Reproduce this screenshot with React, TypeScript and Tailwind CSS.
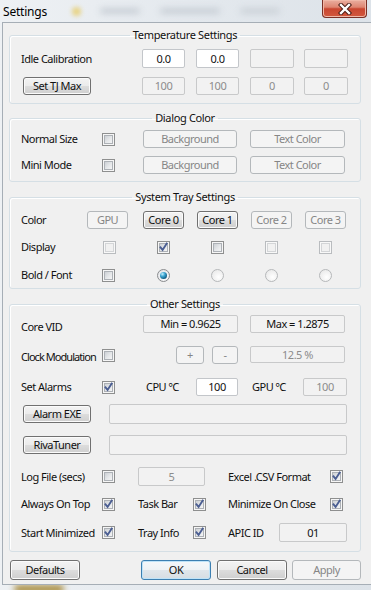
import React from "react";

type Tone = "white" | "ro" | "dis";

function Edit({ tone, className, children }: { tone: Tone; className: string; children?: React.ReactNode }) {
  const t =
    tone === "white"
      ? "bg-white border-[#c3c6ca] text-[#111]"
      : tone === "ro"
      ? "bg-[#f2f2f2] border-[#c8c9ca] text-[#111]"
      : "bg-[#f2f2f2] border-[#c8c9ca] text-[#8c8c8c]";
  return <span className={`flex shrink-0 items-center justify-center rounded-[2px] border ${t} ${className}`}>{children}</span>;
}

type BtnKind = "normal" | "dis" | "def";

function Btn({ kind = "normal", className, children }: { kind?: BtnKind; className: string; children: React.ReactNode }) {
  const k =
    kind === "normal"
      ? "border-[#707070] bg-[linear-gradient(#f3f3f3_0%,#ebebeb_50%,#dddddd_50%,#cfcfcf_100%)] shadow-[inset_0_0_0_1px_#fbfbfb] text-[#111]"
      : kind === "def"
      ? "border-[#3c7fb1] bg-[linear-gradient(#f5f8fa_0%,#eef2f5_50%,#e0e6eb_50%,#d6dde3_100%)] shadow-[inset_0_0_0_1px_#bfe3f8] text-[#111]"
      : "border-[#b4b8bb] bg-[#f4f4f4] text-[#868686]";
  return <span className={`flex shrink-0 items-center justify-center whitespace-nowrap rounded-[3px] border ${k} ${className}`}>{children}</span>;
}

function Check({ checked = false, disabled = false }: { checked?: boolean; disabled?: boolean }) {
  return (
    <span
      className={
        disabled
          ? "flex h-[13px] w-[13px] shrink-0 border border-[#b9bcbf] bg-[#f8f8f8] p-[1px]"
          : "flex h-[13px] w-[13px] shrink-0 border border-[#8e8f8f] bg-[#f6f6f6] p-[1px]"
      }
    >
      <span
        className={
          disabled
            ? "flex h-full w-full items-center justify-center bg-[#f1f1f1] shadow-[inset_0_0_0_1px_#d3d5d7]"
            : "flex h-full w-full items-center justify-center bg-[linear-gradient(135deg,#c6cacf,#e6e8ea_55%,#f8f8f8)] shadow-[inset_0_0_0_1px_#adb1b6]"
        }
      >
        {checked && (
          <svg width="9" height="9" viewBox="0 0 9 9" className="overflow-visible">
            <path d="M1.5 4.3 L3.6 6.9 L7.7 0.6" fill="none" stroke="#4b5e92" strokeWidth="1.9" strokeLinecap="square" />
          </svg>
        )}
      </span>
    </span>
  );
}

function Radio({ selected = false, disabled = false }: { selected?: boolean; disabled?: boolean }) {
  return (
    <span
      className={
        disabled
          ? "flex h-[13px] w-[13px] items-center justify-center rounded-full border border-[#b6b8ba] bg-[radial-gradient(circle_at_60%_65%,#ffffff,#e4e4e4)]"
          : "flex h-[13px] w-[13px] items-center justify-center rounded-full border border-[#8a8c8e] bg-[radial-gradient(circle_at_60%_65%,#ffffff,#dcdfe3)]"
      }
    >
      {selected && (
        <span className="h-[7px] w-[7px] rounded-full bg-[radial-gradient(circle_at_35%_30%,#c4f0fd_0%,#3ea6d2_35%,#0e5b82_75%,#093c59_100%)]" />
      )}
    </span>
  );
}

function Group({ title, className, children }: { title: string; className: string; children: React.ReactNode }) {
  return (
    <fieldset className={`ml-[6px] w-[352px] rounded-[3px] border border-[#d5dfe5] shadow-[inset_1px_1px_0_#ffffff] ${className}`}>
      <legend className="mx-auto px-[3px] leading-[14px] tracking-[-0.35px] text-[#111]">{title}</legend>
      {children}
    </fieldset>
  );
}

function Col({ className, children }: { className: string; children: React.ReactNode }) {
  return <span className={`flex w-[41px] shrink-0 justify-center ${className}`}>{children}</span>;
}

function L({ className, children }: { className: string; children: React.ReactNode }) {
  return <span className={`shrink-0 whitespace-nowrap ${className}`}>{children}</span>;
}

export default function App() {
  return (
    <div className="relative h-[590px] w-[371px] overflow-hidden bg-[linear-gradient(90deg,#eef1f4,#e4e9ee_50%,#dde3e9)] font-['Noto_Sans',sans-serif] text-[11px] leading-[14px] tracking-[-0.5px] text-[#111]">
      {/* blurred background behind glass */}
      <span className="absolute left-[72px] top-[7px] h-[9px] w-[9px] rounded-sm bg-[#e8d58a] blur-[2px]" />
      <span className="absolute left-[100px] top-[8px] h-[6px] w-[40px] rounded-sm bg-[#c9cfd6] blur-[3px]" />
      <span className="absolute left-[160px] top-[8px] h-[6px] w-[60px] rounded-sm bg-[#c9cfd6] blur-[3px]" />
      <span className="absolute left-[240px] top-[8px] h-[6px] w-[40px] rounded-sm bg-[#ccd2d8] blur-[3px]" />
      <span className="absolute left-[14px] top-[585px] h-[8px] w-[50px] rounded-sm bg-[#a88b3c] blur-[3px]" />

      <div className="relative flex h-[22px] items-start">
        <span className="pl-[3px] pt-[5px] text-[12px] leading-[14px] tracking-[-0.2px] text-black">Settings</span>
        <span className="ml-auto mr-[4px] flex h-[18px] w-[45px] items-center justify-center rounded-b-[4px] border border-t-0 border-[#7a3026] bg-[linear-gradient(#eaae9f_0%,#de8672_42%,#c94630_52%,#d2583e_100%)] shadow-[inset_0_0_0_1px_#f0b8a8]">
          <svg width="14" height="12" viewBox="0 0 14 12">
            <path d="M3 2 L11 10 M11 2 L3 10" stroke="#4a1c15" strokeWidth="4.4" strokeLinecap="square" />
            <path d="M3 2 L11 10 M11 2 L3 10" stroke="#ffffff" strokeWidth="2.4" strokeLinecap="square" />
          </svg>
        </span>
      </div>

      <div className="relative ml-[2px] flex h-[563px] w-[369px] flex-col border-l border-t border-b border-[#a6aeb6] bg-[#f0f0f0]">
        {/* Temperature Settings */}
        <Group title="Temperature Settings" className="mt-[5px] pt-[7px] pb-[8px]">
          <div className="flex h-[19px] items-center pl-[11px]">
            <L className="w-[121px]">Idle Calibration</L>
            <Edit tone="white" className="h-[19px] w-[43px]">0.0</Edit>
            <Edit tone="white" className="ml-[11px] h-[19px] w-[43px]">0.0</Edit>
            <Edit tone="dis" className="ml-[11px] h-[19px] w-[44px]" />
            <Edit tone="dis" className="ml-[10px] h-[19px] w-[44px]" />
          </div>
          <div className="mt-[9px] flex h-[18px] items-center pl-[11px]">
            <Btn className="ml-[2px] h-[18px] w-[68px]">Set TJ Max</Btn>
            <Edit tone="dis" className="ml-[51px] h-[18px] w-[43px]">100</Edit>
            <Edit tone="dis" className="ml-[11px] h-[18px] w-[43px]">100</Edit>
            <Edit tone="dis" className="ml-[11px] h-[18px] w-[44px]">0</Edit>
            <Edit tone="dis" className="ml-[10px] h-[18px] w-[44px]">0</Edit>
          </div>
        </Group>

        {/* Dialog Color */}
        <Group title="Dialog Color" className="mt-[7px] pt-[5px] pb-[7px]">
          <div className="flex h-[18px] items-center pl-[11px]">
            <L className="w-[81px]">Normal Size</L>
            <Check />
            <Btn kind="dis" className="ml-[28px] h-[18px] w-[94px]">Background</Btn>
            <Btn kind="dis" className="ml-[13px] h-[18px] w-[95px]">Text Color</Btn>
          </div>
          <div className="mt-[8px] flex h-[18px] items-center pl-[11px]">
            <L className="w-[81px]">Mini Mode</L>
            <Check />
            <Btn kind="dis" className="ml-[28px] h-[18px] w-[94px]">Background</Btn>
            <Btn kind="dis" className="ml-[13px] h-[18px] w-[95px]">Text Color</Btn>
          </div>
        </Group>

        {/* System Tray Settings */}
        <Group title="System Tray Settings" className="mt-[8px] pt-[7px] pb-[4px]">
          <div className="flex h-[18px] items-center pl-[11px]">
            <L className="w-[66px]">Color</L>
            <Btn kind="dis" className="h-[18px] w-[41px]">GPU</Btn>
            <Btn className="ml-[15px] h-[18px] w-[41px]">Core 0</Btn>
            <Btn className="ml-[13px] h-[18px] w-[41px]">Core 1</Btn>
            <Btn kind="dis" className="ml-[13px] h-[18px] w-[41px]">Core 2</Btn>
            <Btn kind="dis" className="ml-[13px] h-[18px] w-[41px]">Core 3</Btn>
          </div>
          <div className="mt-[9px] flex h-[18px] items-center pl-[11px]">
            <L className="w-[66px]">Display</L>
            <Col className="pl-[4px]"><Check disabled /></Col>
            <Col className="ml-[15px]"><Check checked /></Col>
            <Col className="ml-[13px]"><Check /></Col>
            <Col className="ml-[13px]"><Check disabled /></Col>
            <Col className="ml-[13px]"><Check disabled /></Col>
          </div>
          <div className="mt-[10px] flex h-[18px] items-center pl-[11px]">
            <L className="w-[66px]">Bold / Font</L>
            <Col className="pl-[1px]"><Check /></Col>
            <Col className="ml-[15px]"><Radio selected /></Col>
            <Col className="ml-[13px]"><Radio disabled /></Col>
            <Col className="ml-[13px]"><Radio disabled /></Col>
            <Col className="ml-[13px]"><Radio disabled /></Col>
          </div>
        </Group>

        {/* Other Settings */}
        <Group title="Other Settings" className="mt-[8px] pt-[4px] pb-[9px]">
          <div className="flex h-[18px] items-center pl-[11px]">
            <L className="w-[122px] pt-[6px]">Core VID</L>
            <Edit tone="ro" className="h-[18px] w-[95px]">Min = 0.9625</Edit>
            <Edit tone="ro" className="ml-[12px] h-[18px] w-[95px]">Max = 1.2875</Edit>
          </div>
          <div className="mt-[13px] flex h-[18px] items-center pl-[11px]">
            <L className="w-[81px] pt-[3px] tracking-[-0.95px]">Clock Modulation</L>
            <Check />
            <Btn kind="dis" className="ml-[61px] h-[18px] w-[28px]">+</Btn>
            <Btn kind="dis" className="ml-[8px] h-[18px] w-[26px]">-</Btn>
            <Edit tone="dis" className="ml-[12px] h-[17px] w-[95px] self-start">12.5 %</Edit>
          </div>
          <div className="mt-[14px] flex h-[18px] items-center pl-[11px]">
            <L className="w-[81px]">Set Alarms</L>
            <Check checked />
            <L className="ml-[31px] w-[50px]">CPU ℃</L>
            <Edit tone="white" className="h-[18px] w-[42px]">100</Edit>
            <L className="ml-[14px] w-[51px]">GPU ℃</L>
            <Edit tone="dis" className="h-[18px] w-[44px]">100</Edit>
          </div>
          <div className="mt-[8px] flex h-[20px] items-center pl-[11px]">
            <Btn className="ml-[2px] h-[18px] w-[68px]">Alarm EXE</Btn>
            <Edit tone="ro" className="ml-[18px] h-[20px] w-[238px]" />
          </div>
          <div className="mt-[11px] flex h-[20px] items-center pl-[11px]">
            <Btn className="ml-[2px] h-[18px] w-[68px]">RivaTuner</Btn>
            <Edit tone="ro" className="ml-[18px] h-[20px] w-[238px]" />
          </div>
          <div className="mt-[12px] flex h-[19px] items-center pl-[11px]">
            <L className="w-[81px]">Log File (secs)</L>
            <Check />
            <Edit tone="dis" className="ml-[23px] h-[19px] w-[67px]">5</Edit>
            <L className="ml-[23px] w-[102px]">Excel .CSV Format</L>
            <Check checked />
          </div>
          <div className="mt-[9px] flex h-[18px] items-center pl-[11px]">
            <L className="w-[81px]">Always On Top</L>
            <Check checked />
            <L className="ml-[23px] w-[55px]">Task Bar</L>
            <Check checked />
            <L className="ml-[22px] w-[102px]">Minimize On Close</L>
            <Check checked />
          </div>
          <div className="mt-[10px] flex h-[19px] items-center pl-[11px]">
            <L className="w-[81px]">Start Minimized</L>
            <Check checked />
            <L className="ml-[23px] w-[55px]">Tray Info</L>
            <Check checked />
            <L className="ml-[22px] w-[51px]">APIC ID</L>
            <Edit tone="ro" className="h-[19px] w-[68px]">01</Edit>
          </div>
        </Group>

        <div className="mt-[8px] flex h-[20px] items-center">
          <Btn className="ml-[7px] h-[20px] w-[70px]">Defaults</Btn>
          <Btn kind="def" className="ml-[61px] h-[20px] w-[70px]">OK</Btn>
          <Btn className="ml-[6px] h-[20px] w-[70px]">Cancel</Btn>
          <Btn kind="dis" className="ml-[5px] h-[20px] w-[69px]">Apply</Btn>
        </div>
      </div>
    </div>
  );
}
